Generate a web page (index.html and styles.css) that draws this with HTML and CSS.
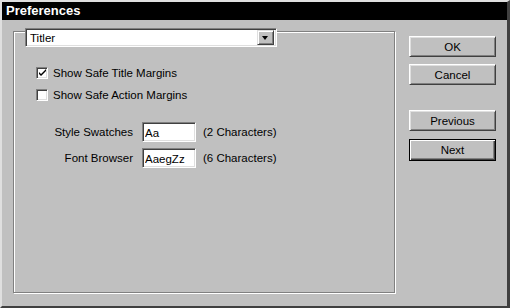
FILE: index.html
```html
<!DOCTYPE html>
<html lang="en">
<head>
    <meta charset="UTF-8">
    <title>Preferences</title>
    <link rel="stylesheet" href="styles.css">
</head>
<body>
    <div class="window">
        <div class="titlebar">Preferences</div>
        <div class="content">
            <div class="panel">
                <div class="dropdown">
                    <span class="dropdown-value">Titler</span>
                    <span class="dropdown-arrow"></span>
                </div>
                <div class="group">
                    <div class="option">
                        <span class="checkbox">
                            <svg width="9" height="9" viewBox="0 0 9 9"><path d="M1 3 L3 5 L8 0 L8 2 L3 7 L1 5 Z" fill="#000"/></svg>
                        </span>
                        <span>Show Safe Title Margins</span>
                    </div>
                    <div class="option">
                        <span class="checkbox"></span>
                        <span>Show Safe Action Margins</span>
                    </div>

                    <div class="fields">
                        <span class="field-label">Style Swatches</span>
                        <input class="field-input" type="text" value="Aa">
                        <span class="field-hint">(2 Characters)</span>

                        <span class="field-label">Font Browser</span>
                        <input class="field-input" type="text" value="AaegZz">
                        <span class="field-hint">(6 Characters)</span>
                    </div>
                </div>
            </div>

            <div class="buttons">
                <button class="btn">OK</button>
                <button class="btn">Cancel</button>
                <button class="btn btn-spaced">Previous</button>
                <button class="btn btn-default">Next</button>
            </div>
        </div>
    </div>
</body>
</html>
```

FILE: styles.css
```css
body{
    margin: 0;
    background-color: #c0c0c0;
    font-family: "Liberation Sans", Arial, sans-serif;
    font-size: 11.5px;
    color: #000;
}

.window{
    width: 510px;
    height: 308px;
    box-sizing: border-box;
    border: 2px solid;
    border-color: #dfdfdf #404040 #404040 #dfdfdf;
    border-right-width: 3px;
    background-color: #c0c0c0;
}

.titlebar{
    height: 18px;
    line-height: 18px;
    padding-left: 4px;
    background-color: #000;
    color: #fff;
    font-weight: bold;
    font-size: 13px;
}

.content{
    display: flex;
    padding-left: 11px;
}

.panel{
    padding-top: 8px;
}

.dropdown{
    position: relative;
    z-index: 1;
    display: flex;
    align-items: center;
    width: 252px;
    height: 19px;
    margin-left: 12px;
    box-sizing: border-box;
    background-color: #fff;
    border: 1px solid;
    border-color: #808080 #fff #fff #808080;
    box-shadow: inset 1px 1px 0 #404040, inset -1px -1px 0 #dfdfdf;
    padding: 2px;
}

.dropdown-value{
    flex: 1;
    padding-left: 2px;
}

.dropdown-arrow{
    position: relative;
    width: 17px;
    height: 15px;
    box-sizing: border-box;
    background-color: #c0c0c0;
    border: 1px solid;
    border-color: #dfdfdf #404040 #404040 #dfdfdf;
    box-shadow: inset 1px 1px 0 #fff, inset -1px -1px 0 #808080;
}

.dropdown-arrow::after{
    content: "";
    position: absolute;
    left: 4px;
    top: 5px;
    border-left: 3.5px solid transparent;
    border-right: 3.5px solid transparent;
    border-top: 4px solid #000;
}

.group{
    width: 382px;
    height: 262px;
    margin-top: -16px;
    box-sizing: border-box;
    border: 1px solid #808080;
    box-shadow: 1px 1px 0 #fff, inset 1px 1px 0 #fff;
    padding: 32px 0 0 22px;
}

.option{
    display: flex;
    align-items: center;
    gap: 5px;
    height: 18px;
    margin-bottom: 4px;
}

.checkbox{
    display: flex;
    align-items: center;
    justify-content: center;
    width: 12px;
    height: 12px;
    box-sizing: border-box;
    background-color: #fff;
    border: 1px solid;
    border-color: #808080 #fff #fff #808080;
    box-shadow: inset 1px 1px 0 #404040, inset -1px -1px 0 #dfdfdf;
}

.fields{
    display: grid;
    grid-template-columns: 97px 54px auto;
    column-gap: 9px;
    row-gap: 6px;
    align-items: center;
    margin-top: 18px;
}

.field-label{
    text-align: right;
}

.field-input{
    width: 54px;
    height: 20px;
    box-sizing: border-box;
    margin: 0;
    padding: 1px 2px 0;
    font-family: inherit;
    font-size: 11.5px;
    color: #000;
    background-color: #fff;
    border: 1px solid;
    border-color: #808080 #fff #fff #808080;
    box-shadow: inset 1px 1px 0 #404040, inset -1px -1px 0 #dfdfdf;
    outline: none;
}

.field-hint{
    margin-left: -2px;
}

.buttons{
    display: flex;
    flex-direction: column;
    gap: 7px;
    margin-left: 14px;
    padding-top: 16px;
}

.btn{
    width: 87px;
    height: 21px;
    padding: 0;
    font-family: inherit;
    font-size: 11.5px;
    color: #000;
    background-color: #c0c0c0;
    border: 1px solid;
    border-color: #fff #404040 #404040 #fff;
    box-shadow: inset 1px 1px 0 #dfdfdf, inset -1px -1px 0 #808080;
}

.btn-spaced{
    margin-top: 18px;
}

.btn-default{
    margin-top: 1px;
    height: 22px;
    border-color: #000;
    box-shadow: inset 1px 1px 0 #fff, inset -1px -1px 0 #404040, inset -2px -2px 0 #808080;
}
```
